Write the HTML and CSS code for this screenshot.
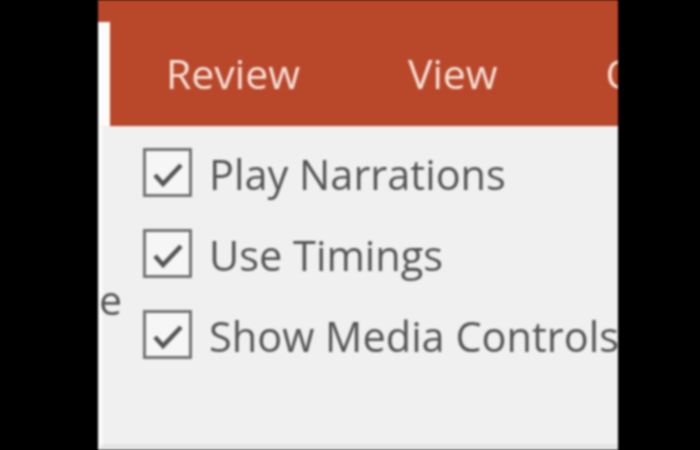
FILE: index.html
```html
<!DOCTYPE html>
<html lang="en">
<head>
  <meta charset="UTF-8">
  <title>Slide Show Ribbon</title>
  <link rel="stylesheet" href="styles.css">
</head>
<body>
  <div class="screen">
    <div class="ribbon-top"></div>
    <div class="ribbon-row">
      <div class="edge"></div>
      <div class="tabs">
        <span class="tab">Review</span>
        <span class="tab">View</span>
        <span class="tab">Q</span>
      </div>
    </div>
    <div class="panel">
      <div class="prev-group"><span class="group-tail">e</span></div>
      <div class="options">
        <label class="option">
          <span class="box">
            <svg viewBox="0 0 43 43" width="43" height="43"><path d="M9 24 L17 33 L35 14" /></svg>
          </span>
          Play Narrations
        </label>
        <label class="option">
          <span class="box">
            <svg viewBox="0 0 43 43" width="43" height="43"><path d="M9 24 L17 33 L35 14" /></svg>
          </span>
          Use Timings
        </label>
        <label class="option">
          <span class="box">
            <svg viewBox="0 0 43 43" width="43" height="43"><path d="M9 24 L17 33 L35 14" /></svg>
          </span>
          Show Media Controls
        </label>
      </div>
    </div>
  </div>
</body>
</html>
```

FILE: styles.css
```css
:root { --accent: #b9482b; --panel: #f0f0f0; --ink: #555555; }
html, body { margin: 0; height: 100%; }
body { background: #000; font-family: "Open Sans", "Noto Sans", sans-serif; }

.screen { margin-left: 98px; width: 520px; height: 450px; overflow: hidden; background: var(--panel); display: flex; flex-direction: column; filter: blur(0.8px); }

.ribbon-top { height: 22px; background: var(--accent); flex: none; }
.ribbon-row { display: flex; height: 104px; flex: none; }
.edge { width: 12px; flex: none; background: #fbfbfb; }
.tabs { flex: 1; min-width: 0; background: var(--accent); display: flex; align-items: center; gap: 108px; padding-left: 56px; padding-bottom: 2px; white-space: nowrap; overflow: hidden; }
.tab { color: #f5dfd6; font-size: 41px; font-weight: 500; }

.panel { flex: 1; display: flex; border-top: 2px solid #f7ebe7; border-left: 5px solid #fafafa; border-bottom: 6px solid #e4e4e4; }
.prev-group { width: 40px; flex: none; display: flex; align-items: center; padding-top: 26px; }
.group-tail { color: var(--ink); font-size: 41px; margin-left: -4px; }

.options { min-width: 0; display: flex; flex-direction: column; gap: 32px; padding-top: 22px; }
.option { display: flex; align-items: center; gap: 17px; color: var(--ink); font-size: 41.5px; font-weight: 500; white-space: nowrap; height: 49px; line-height: 1; }
.box { width: 43px; height: 43px; border: 3px solid #747474; background: #f6f6f6; flex: none; margin-top: -4px; }
.box svg { display: block; }
.box path { fill: none; stroke: #555; stroke-width: 4.5; stroke-linejoin: miter; }
```
